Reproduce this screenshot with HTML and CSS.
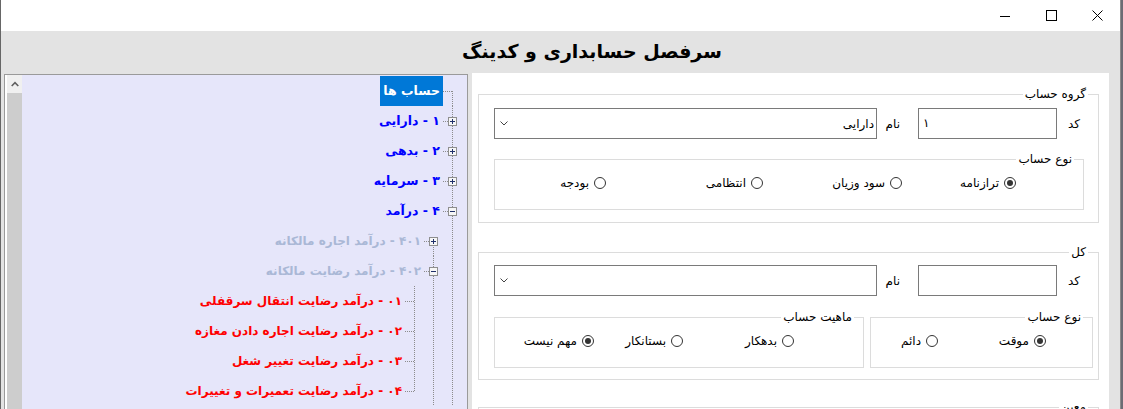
FILE: index.html
```html
<!DOCTYPE html>
<html lang="fa">
<head>
<meta charset="utf-8">
<title>سرفصل حسابداری و کدینگ</title>
<link rel="stylesheet" href="styles.css">
</head>
<body>
<div class="window">
  <div class="titlebar">
    <div class="tb-btn"><svg width="10" height="10" viewBox="0 0 10 10"><path d="M0 5.5h10" stroke="#000" stroke-width="1" fill="none"/></svg></div>
    <div class="tb-btn"><svg width="11" height="11" viewBox="0 0 11 11"><rect x="0.5" y="0.5" width="10" height="10" stroke="#000" stroke-width="1" fill="none"/></svg></div>
    <div class="tb-btn"><svg width="11" height="11" viewBox="0 0 11 11"><path d="M0.5 0.5L10.5 10.5M10.5 0.5L0.5 10.5" stroke="#000" stroke-width="1" fill="none"/></svg></div>
  </div>
  <div class="client">
    <h1 class="heading">سرفصل حسابداری و کدینگ</h1>
    <div class="panes">
      <div class="tree">
        <div class="vscroll">
          <div class="vs-up"><svg width="8" height="6" viewBox="0 0 8 6"><path d="M0.7 5L4 1.6L7.3 5" stroke="#606060" stroke-width="1.6" fill="none"/></svg></div>
          <div class="vs-thumb"></div>
        </div>
        <div class="tree-body">
          <div class="node">
            <span class="cell ln-root"></span>
            <span class="label root">حساب ها</span>
          </div>
          <div class="node">
            <span class="cell ln-vh"><svg class="exp" width="9" height="9" viewBox="0 0 9 9"><rect x="0.5" y="0.5" width="8" height="8" fill="#f6f6f6" stroke="#8e8e8e"/><path d="M2 4.5h5M4.5 2v5" stroke="#1f2f6a"/></svg></span>
            <span class="label blue">۱ - دارایی</span>
          </div>
          <div class="node">
            <span class="cell ln-vh"><svg class="exp" width="9" height="9" viewBox="0 0 9 9"><rect x="0.5" y="0.5" width="8" height="8" fill="#f6f6f6" stroke="#8e8e8e"/><path d="M2 4.5h5M4.5 2v5" stroke="#1f2f6a"/></svg></span>
            <span class="label blue">۲ - بدهی</span>
          </div>
          <div class="node">
            <span class="cell ln-vh"><svg class="exp" width="9" height="9" viewBox="0 0 9 9"><rect x="0.5" y="0.5" width="8" height="8" fill="#f6f6f6" stroke="#8e8e8e"/><path d="M2 4.5h5M4.5 2v5" stroke="#1f2f6a"/></svg></span>
            <span class="label blue">۳ - سرمایه</span>
          </div>
          <div class="node">
            <span class="cell ln-vh"><svg class="exp" width="9" height="9" viewBox="0 0 9 9"><rect x="0.5" y="0.5" width="8" height="8" fill="#f6f6f6" stroke="#8e8e8e"/><path d="M2 4.5h5" stroke="#1f2f6a"/></svg></span>
            <span class="label blue">۴ - درآمد</span>
          </div>
          <div class="node">
            <span class="cell ln-v"></span>
            <span class="cell ln-dh"><svg class="exp" width="9" height="9" viewBox="0 0 9 9"><rect x="0.5" y="0.5" width="8" height="8" fill="#f6f6f6" stroke="#8e8e8e"/><path d="M2 4.5h5M4.5 2v5" stroke="#1f2f6a"/></svg></span>
            <span class="label pale">۴۰۱ - درآمد اجاره مالکانه</span>
          </div>
          <div class="node">
            <span class="cell ln-v"></span>
            <span class="cell ln-vh"><svg class="exp" width="9" height="9" viewBox="0 0 9 9"><rect x="0.5" y="0.5" width="8" height="8" fill="#f6f6f6" stroke="#8e8e8e"/><path d="M2 4.5h5" stroke="#1f2f6a"/></svg></span>
            <span class="label pale">۴۰۲ - درآمد رضایت مالکانه</span>
          </div>
          <div class="node">
            <span class="cell ln-v"></span>
            <span class="cell ln-v"></span>
            <span class="cell ln-vh"></span>
            <span class="label red">۰۱ - درآمد رضایت انتقال سرقفلی</span>
          </div>
          <div class="node">
            <span class="cell ln-v"></span>
            <span class="cell ln-v"></span>
            <span class="cell ln-vh"></span>
            <span class="label red">۰۲ - درآمد رضایت اجاره دادن مغازه</span>
          </div>
          <div class="node">
            <span class="cell ln-v"></span>
            <span class="cell ln-v"></span>
            <span class="cell ln-vh"></span>
            <span class="label red">۰۳ - درآمد رضایت تغییر شغل</span>
          </div>
          <div class="node">
            <span class="cell ln-v"></span>
            <span class="cell ln-v"></span>
            <span class="cell ln-uh"></span>
            <span class="label red">۰۴ - درآمد رضایت تعمیرات و تغییرات</span>
          </div>
        </div>
      </div>

      <div class="form">
        <fieldset class="group outer g1">
          <legend>گروه حساب</legend>
          <div class="gb-body">
            <div class="field-row">
              <span class="lbl lbl-code">کد</span>
              <div class="textbox">۱</div>
              <span class="lbl lbl-name">نام</span>
              <div class="combo"><span class="combo-text">دارایی</span><svg width="8" height="5" viewBox="0 0 8 5"><path d="M0.5 0.5L4 4L7.5 0.5" stroke="#444" stroke-width="1" fill="none"/></svg></div>
            </div>
            <fieldset class="group sub sub-g1">
              <legend>نوع حساب</legend>
              <div class="sub-body">
                <div class="radios r-g1">
                  <span class="radio on"><i class="circle"></i>ترازنامه</span>
                  <span class="radio"><i class="circle"></i>سود وزیان</span>
                  <span class="radio"><i class="circle"></i>انتظامی</span>
                  <span class="radio"><i class="circle"></i>بودجه</span>
                </div>
              </div>
            </fieldset>
          </div>
        </fieldset>

        <fieldset class="group outer g2">
          <legend>کل</legend>
          <div class="gb-body">
            <div class="field-row">
              <span class="lbl lbl-code">کد</span>
              <div class="textbox"></div>
              <span class="lbl lbl-name">نام</span>
              <div class="combo"><span class="combo-text"></span><svg width="8" height="5" viewBox="0 0 8 5"><path d="M0.5 0.5L4 4L7.5 0.5" stroke="#444" stroke-width="1" fill="none"/></svg></div>
            </div>
            <div class="sub-row">
              <fieldset class="group sub sub-type">
                <legend>نوع حساب</legend>
                <div class="sub-body">
                  <div class="radios r-type">
                    <span class="radio on"><i class="circle"></i>موقت</span>
                    <span class="radio"><i class="circle"></i>دائم</span>
                  </div>
                </div>
              </fieldset>
              <fieldset class="group sub sub-nature">
                <legend>ماهیت حساب</legend>
                <div class="sub-body">
                  <div class="radios r-nature">
                    <span class="radio"><i class="circle"></i>بدهکار</span>
                    <span class="radio"><i class="circle"></i>بستانکار</span>
                    <span class="radio on"><i class="circle"></i>مهم نیست</span>
                  </div>
                </div>
              </fieldset>
            </div>
          </div>
        </fieldset>

        <fieldset class="group outer g3">
          <legend>معین</legend>
          <div class="gb-body"></div>
        </fieldset>
      </div>
    </div>
  </div>
</div>
</body>
</html>
```

FILE: styles.css
```css
* { box-sizing: border-box; }
html, body { margin: 0; height: 100%; }
body {
  background: #6c6c74;
  font-family: "DejaVu Sans", sans-serif;
  overflow: hidden;
}
.window {
  width: 1121px;
  height: 409px;
  display: flex;
  flex-direction: column;
  border-left: 1px solid #666;
  border-right: 1px solid #8c8c8c;
  background: #e3e3e3;
  overflow: hidden;
}
.titlebar {
  height: 31px;
  flex: none;
  background: #fff;
  display: flex;
  justify-content: flex-end;
}
.tb-btn {
  width: 46px;
  display: flex;
  align-items: center;
  justify-content: center;
}
.client {
  flex: 1;
  min-height: 0;
  display: flex;
  flex-direction: column;
  padding-left: 3px;
}
.heading {
  margin: 0;
  flex: none;
  height: 42px;
  line-height: 40px;
  font-size: 19px;
  font-weight: bold;
  text-align: center;
  padding-left: 60px;
  direction: rtl;
  color: #000;
}
.panes {
  flex: 1;
  min-height: 0;
  display: flex;
  gap: 4px;
}

/* tree */
.tree {
  width: 464px;
  flex: none;
  margin-top: 1px;
  border: 1px solid #9a9a9a;
  border-bottom: none;
  display: flex;
  background: #e6e6fa;
}
.vscroll {
  width: 17px;
  flex: none;
  background: #fff;
  padding-left: 2px;
  display: flex;
  flex-direction: column;
}
.vs-up {
  height: 18px;
  flex: none;
  background: #f0f0f0;
  display: flex;
  align-items: center;
  justify-content: center;
}
.vs-thumb { flex: 1; background: #cdcdcd; }
.tree-body {
  flex: 1;
  direction: rtl;
  padding: 1px 5px 0 0;
  overflow: hidden;
}
.node {
  display: flex;
  height: 30px;
  align-items: center;
}
.cell {
  --dv: repeating-linear-gradient(to bottom, #8c8c8c 0 1px, transparent 1px 2px);
  --dh: repeating-linear-gradient(to right, #8c8c8c 0 1px, transparent 1px 2px);
  width: 19px;
  height: 30px;
  flex: none;
  display: flex;
  align-items: center;
  justify-content: center;
  background-repeat: no-repeat;
}
.exp { display: block; }
.ln-v { background-image: var(--dv); background-position: 9px 0; background-size: 1px 100%; }
.ln-vh {
  background-image: var(--dv), var(--dh);
  background-position: 9px 0, 0 15px;
  background-size: 1px 100%, 9px 1px;
}
.ln-root, .ln-dh {
  background-image: var(--dv), var(--dh);
  background-position: 9px 15px, 0 15px;
  background-size: 1px 15px, 9px 1px;
}
.ln-uh {
  background-image: var(--dv), var(--dh);
  background-position: 9px 0, 0 15px;
  background-size: 1px 16px, 9px 1px;
}
.label {
  padding: 0 3px;
  height: 30px;
  line-height: 30px;
  font-size: 12px;
  font-weight: bold;
  white-space: nowrap;
}
.label.root { background: #0078d7; color: #fff; font-size: 12.5px; }
.label.blue { color: #0000ff; font-size: 12.5px; }
.label.pale { color: #aab8d6; }
.label.red { color: #ff0000; }

/* form */
.form {
  width: 637px;
  flex: none;
  background: #fff;
  direction: rtl;
  font-size: 12px;
  color: #000;
  overflow: hidden;
}
.group {
  margin: 0;
  padding: 0;
  min-width: 0;
  border: 1px solid #dcdcdc;
}
.group > legend {
  padding: 0 2px;
  margin-right: 9px;
  height: 15px;
  line-height: 15px;
  font-size: 12px;
  white-space: nowrap;
}
.outer { margin: 14px 10px 0 6px; }
.outer > legend { margin-right: 10px; }
.g2 { margin-top: 22px; }
.g3 { margin-top: 20px; height: 60px; }
.gb-body { padding: 6px 5px 12px 15px; }
.g2 .gb-body { padding-top: 5px; padding-bottom: 11px; }
.field-row {
  display: flex;
  align-items: center;
  height: 31px;
  padding-right: 13px;
}
.lbl { flex: none; white-space: nowrap; }
.lbl-code { width: 23px; }
.lbl-name { width: 41px; padding-right: 18px; }
.textbox {
  width: 139px;
  height: 31px;
  flex: none;
  border: 1px solid #7a7a7a;
  background: #fff;
  direction: ltr;
  text-align: left;
  padding-left: 4px;
  line-height: 29px;
}
.combo {
  width: 383px;
  height: 31px;
  flex: none;
  border: 1px solid #7a7a7a;
  display: flex;
  align-items: center;
  justify-content: space-between;
  padding: 0 2px 0 5px;
}
.combo svg { display: block; }
.sub-g1 { margin: 13px 9px 0 0; }
.sub-row {
  display: flex;
  gap: 6px;
  margin-top: 14px;
}
.sub-type { width: 223px; flex: none; }
.sub-nature { flex: 1; }
.sub-body { padding: 8px 0 18px 0; }
.radios {
  display: grid;
  grid-auto-flow: column;
  height: 16px;
  align-items: center;
}
.r-g1 { grid-template-columns: 114px 139px 157px 1fr; padding-right: 67px; }
.r-type { grid-template-columns: 108px 1fr; padding-right: 46px; }
.r-nature { grid-template-columns: 111px 89px 1fr; padding-right: 69px; }
.radio {
  display: flex;
  align-items: center;
  gap: 5px;
  white-space: nowrap;
}
.circle {
  width: 12px;
  height: 12px;
  flex: none;
  border: 1px solid #333;
  border-radius: 50%;
  display: flex;
  align-items: center;
  justify-content: center;
}
.radio.on .circle::after {
  content: "";
  width: 6px;
  height: 6px;
  border-radius: 50%;
  background: #333;
}
```
